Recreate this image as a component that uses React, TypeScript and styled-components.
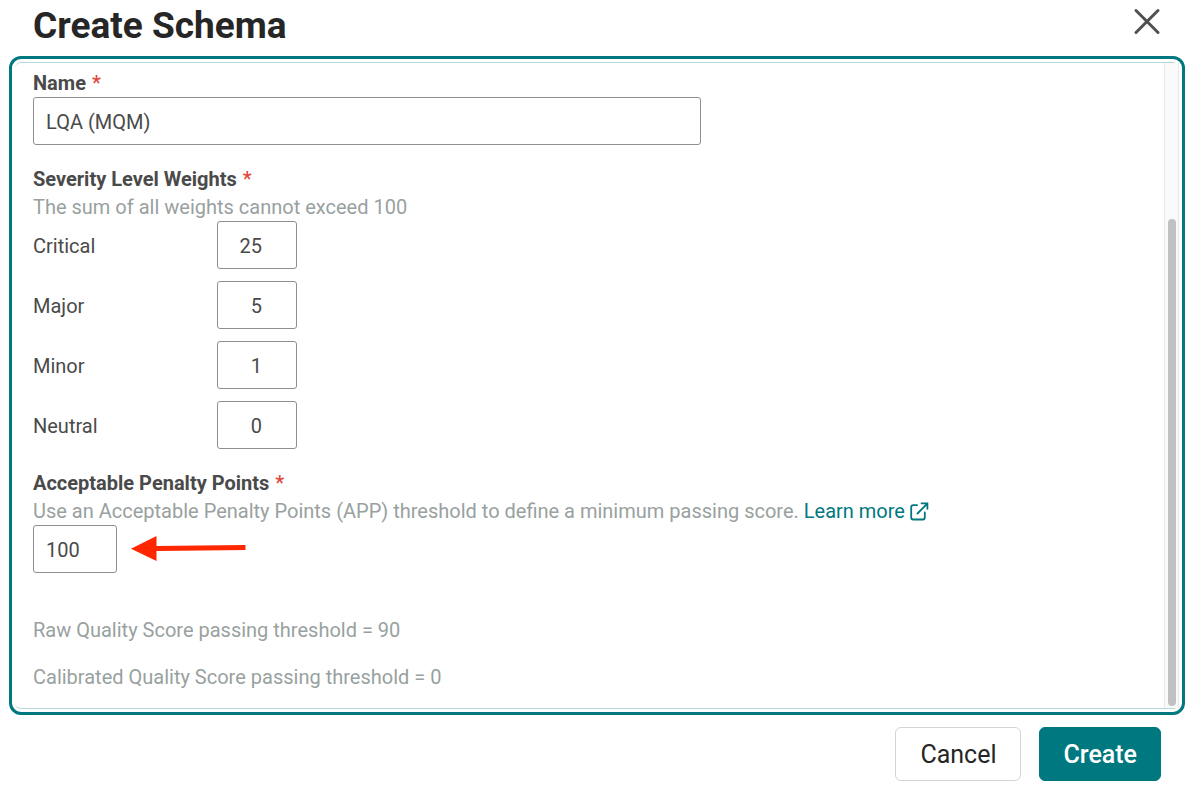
import React, { useState } from "react";
import styled, { createGlobalStyle } from "styled-components";

const GlobalStyle = createGlobalStyle`
  *, *::before, *::after { box-sizing: border-box; }
  body {
    margin: 0;
    background: #ffffff;
    color: #4a4a4a;
    font-family: Roboto, "Liberation Sans", sans-serif;
    font-size: 20px;
    line-height: 28px;
  }
`;

const Dialog = styled.form`
  display: flex;
  flex-direction: column;
  padding: 0 11px 10px 9px;
`;

const Header = styled.header`
  display: flex;
  align-items: flex-start;
  justify-content: space-between;
  height: 56px;
  padding: 3px 22px 0 24px;
`;

const Title = styled.h1`
  margin: 0;
  font-size: 37px;
  font-weight: 700;
  line-height: 46px;
  color: #262626;
`;

const CloseButton = styled.button`
  display: flex;
  padding: 4px 0;
  border: 0;
  background: none;
  color: #505050;
  cursor: pointer;
`;

const Panel = styled.div`
  padding: 3px;
  border: 3px solid #00787f;
  border-radius: 12px;
`;

const Viewport = styled.div`
  display: flex;
  border-top: 1px solid #b5dadc;
  border-bottom: 1px solid #b5dadc;
  border-radius: 6px;
`;

const Fields = styled.div`
  flex: 1;
  display: flex;
  flex-direction: column;
  padding: 6px 18px 17px;
`;

const ScrollTrack = styled.div`
  display: flex;
  align-items: flex-end;
  width: 15px;
  padding: 2px 2px 2px 3px;
  border: 1px solid #e8e8e8;
  border-width: 0 1px;
  background: #fafafa;
`;

const ScrollThumb = styled.div`
  width: 8px;
  height: 76%;
  border-radius: 4px;
  background: #c1c1c1;
`;

const Section = styled.fieldset`
  min-width: 0;
  margin: 0 0 20px;
  padding: 0;
  border: 0;
`;

const labelStyle = `
  display: block;
  padding: 0;
  font-weight: 700;
`;

const FieldLabel = styled.label`${labelStyle}`;
const Legend = styled.legend`${labelStyle}`;

const Required = styled.span`
  margin-left: 6px;
  font-weight: 500;
  color: #e0483e;
`;

const Hint = styled.p`
  margin: 0;
  color: #98a19f;
`;

const TextInput = styled.input<{ $width: string; $align?: string }>`
  display: block;
  width: ${(p) => p.$width};
  height: 48px;
  padding: 2px ${(p) => (p.$align === "right" ? "34px" : "12px")} 0 12px;
  border: 1px solid #8f8f8f;
  border-radius: 3px;
  background: #ffffff;
  color: #4a4a4a;
  font: inherit;
  text-align: ${(p) => p.$align ?? "left"};
  outline: none;
`;

const WeightList = styled.div`
  display: flex;
  flex-direction: column;
  gap: 12px;
`;

const WeightRow = styled.div`
  display: grid;
  grid-template-columns: 184px auto;
  align-items: center;
  justify-content: start;
`;

const WeightLabel = styled.label`
  padding-top: 2px;
`;

const PointsRow = styled.div`
  display: flex;
  align-items: center;
  gap: 14px;
`;

const LearnMore = styled.a`
  display: inline-flex;
  align-items: center;
  gap: 5px;
  color: #00787f;
  text-decoration: none;
`;

const Results = styled.div`
  display: flex;
  flex-direction: column;
  gap: 19px;
  margin-top: 23px;
`;

const Footer = styled.footer`
  display: flex;
  justify-content: flex-end;
  gap: 18px;
  padding: 12px 24px 0;
`;

const ActionButton = styled.button<{ $primary?: boolean }>`
  height: 54px;
  padding: 1px ${(p) => (p.$primary ? "23px" : "24px")} 0;
  border: 1px solid ${(p) => (p.$primary ? "#00787f" : "#d4d4d4")};
  border-radius: 6px;
  background: ${(p) => (p.$primary ? "#00787f" : "#ffffff")};
  color: ${(p) => (p.$primary ? "#ffffff" : "#262626")};
  font-family: inherit;
  font-size: 25px;
  font-weight: ${(p) => (p.$primary ? 500 : 400)};
  cursor: pointer;
`;

const ExternalIcon = () => (
  <svg width="19" height="19" viewBox="0 0 19 19" fill="none" stroke="currentColor" strokeWidth="1.8" aria-hidden="true">
    <path d="M7 3.2H3.2Q1.2 3.2 1.2 5.2V15.5Q1.2 17.5 3.2 17.5H12.8Q14.8 17.5 14.8 15.5V10.5" strokeLinecap="round" />
    <path d="M7.5 11.5L17 1.8M11.5 1.3H17.4V6.8" strokeLinecap="round" />
  </svg>
);

const ArrowLeft = () => (
  <svg width="115" height="26" viewBox="0 0 115 26" aria-hidden="true">
    <path d="M0 12.7L25.5 0V10L114.5 9V14L25.5 15V25Z" fill="#ff2600" />
  </svg>
);

const LEVELS = ["Critical", "Major", "Minor", "Neutral"];

export default function App() {
  const [name, setName] = useState("LQA (MQM)");
  const [weights, setWeights] = useState(["25", "5", "1", "0"]);
  const [points, setPoints] = useState("100");

  return (
    <>
      <GlobalStyle />
      <Dialog role="dialog" aria-labelledby="dialog-title" onSubmit={(e) => e.preventDefault()}>
        <Header>
          <Title id="dialog-title">Create Schema</Title>
          <CloseButton type="button" aria-label="Close">
            <svg width="32" height="30" viewBox="0 0 32 30" stroke="currentColor" strokeWidth="3" strokeLinecap="round">
              <path d="M5 3.5L27 25.5M27 3.5L5 25.5" />
            </svg>
          </CloseButton>
        </Header>
        <Panel>
          <Viewport>
            <Fields>
              <Section>
                <FieldLabel htmlFor="name">
                  Name<Required>*</Required>
                </FieldLabel>
                <TextInput id="name" $width="min(100%, 668px)" value={name} onChange={(e) => setName(e.target.value)} />
              </Section>
              <Section>
                <Legend>
                  Severity Level Weights<Required>*</Required>
                </Legend>
                <Hint>The sum of all weights cannot exceed 100</Hint>
                <WeightList>
                  {LEVELS.map((level, i) => (
                    <WeightRow key={level}>
                      <WeightLabel htmlFor={level}>{level}</WeightLabel>
                      <TextInput
                        id={level}
                        $width="80px"
                        $align="right"
                        inputMode="numeric"
                        value={weights[i]}
                        onChange={(e) => setWeights(weights.map((w, j) => (j === i ? e.target.value : w)))}
                      />
                    </WeightRow>
                  ))}
                </WeightList>
              </Section>
              <Section>
                <FieldLabel htmlFor="points">
                  Acceptable Penalty Points<Required>*</Required>
                </FieldLabel>
                <Hint>
                  Use an Acceptable Penalty Points (APP) threshold to define a minimum passing score.{" "}
                  <LearnMore href="#learn-more">
                    Learn more
                    <ExternalIcon />
                  </LearnMore>
                </Hint>
                <PointsRow>
                  <TextInput
                    id="points"
                    $width="84px"
                    inputMode="numeric"
                    value={points}
                    onChange={(e) => setPoints(e.target.value)}
                  />
                  <ArrowLeft />
                </PointsRow>
              </Section>
              <Results>
                <Hint>Raw Quality Score passing threshold = 90</Hint>
                <Hint>Calibrated Quality Score passing threshold = 0</Hint>
              </Results>
            </Fields>
            <ScrollTrack aria-hidden="true">
              <ScrollThumb />
            </ScrollTrack>
          </Viewport>
        </Panel>
        <Footer>
          <ActionButton type="button">Cancel</ActionButton>
          <ActionButton type="submit" $primary>
            Create
          </ActionButton>
        </Footer>
      </Dialog>
    </>
  );
}
